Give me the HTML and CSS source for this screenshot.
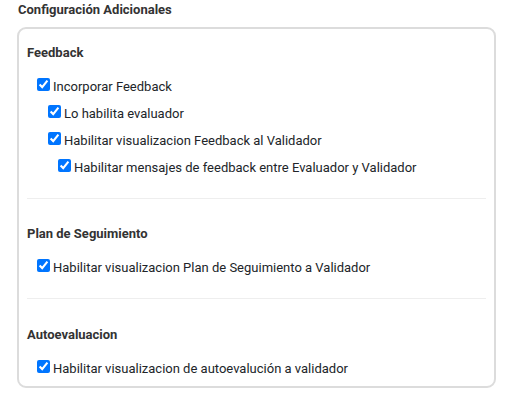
FILE: index.html
```html
<!DOCTYPE html>
<html lang="es">
<head>
<meta charset="utf-8">
<link rel="stylesheet" href="styles.css">
</head>
<body>
<div class="wrap">
  <div class="title">Configuración Adicionales</div>
  <div class="card">
    <div class="section first">
      <div class="sec-title">Feedback</div>
      <label class="row l1"><input type="checkbox" checked><span>Incorporar Feedback</span></label>
      <label class="row l2"><input type="checkbox" checked><span>Lo habilita evaluador</span></label>
      <label class="row l2"><input type="checkbox" checked><span>Habilitar visualizacion Feedback al Validador</span></label>
      <label class="row l3"><input type="checkbox" checked><span>Habilitar mensajes de feedback entre Evaluador y Validador</span></label>
    </div>
    <div class="section">
      <div class="sec-title">Plan de Seguimiento</div>
      <label class="row l1"><input type="checkbox" checked><span>Habilitar visualizacion Plan de Seguimiento a Validador</span></label>
    </div>
    <div class="section last">
      <div class="sec-title">Autoevaluacion</div>
      <label class="row l1"><input type="checkbox" checked><span>Habilitar visualizacion de autoevalución a validador</span></label>
    </div>
  </div>
</div>
</body>
</html>
```
FILE: styles.css
```css
html, body {
  margin: 0;
  padding: 0;
  background: #fff;
}
body {
  font-family: Roboto, "Liberation Sans", Arial, sans-serif;
  font-size: 13px;
  color: #212529;
}
.wrap {
  padding: 0 13px 0 17px;
}
.title {
  line-height: 20px;
  font-weight: 700;
  color: #333;
  padding-left: 1px;
}
.card {
  margin-top: 7px;
  border: 2px solid #dcdcdc;
  border-radius: 9px;
  padding: 0 8px 4px 8px;
}
.section {
  padding-top: 25px;
  border-top: 1px solid #eeeeee;
  padding-bottom: 17px;
}
.section.first {
  padding-top: 14px;
  border-top: none;
}
.section.last {
  padding-top: 26px;
  padding-bottom: 0;
}
.sec-title {
  line-height: 20px;
  font-weight: 700;
  color: #333;
  margin-bottom: 10px;
}
.row {
  display: flex;
  align-items: flex-start;
  line-height: 27px;
  height: 27px;
  white-space: nowrap;
}
.row input {
  width: 13px;
  height: 13px;
  margin: 5px 3px 0 0;
  flex: none;
}
.l1 { padding-left: 10px; }
.l2 { padding-left: 21px; }
.l3 { padding-left: 31px; }
```
